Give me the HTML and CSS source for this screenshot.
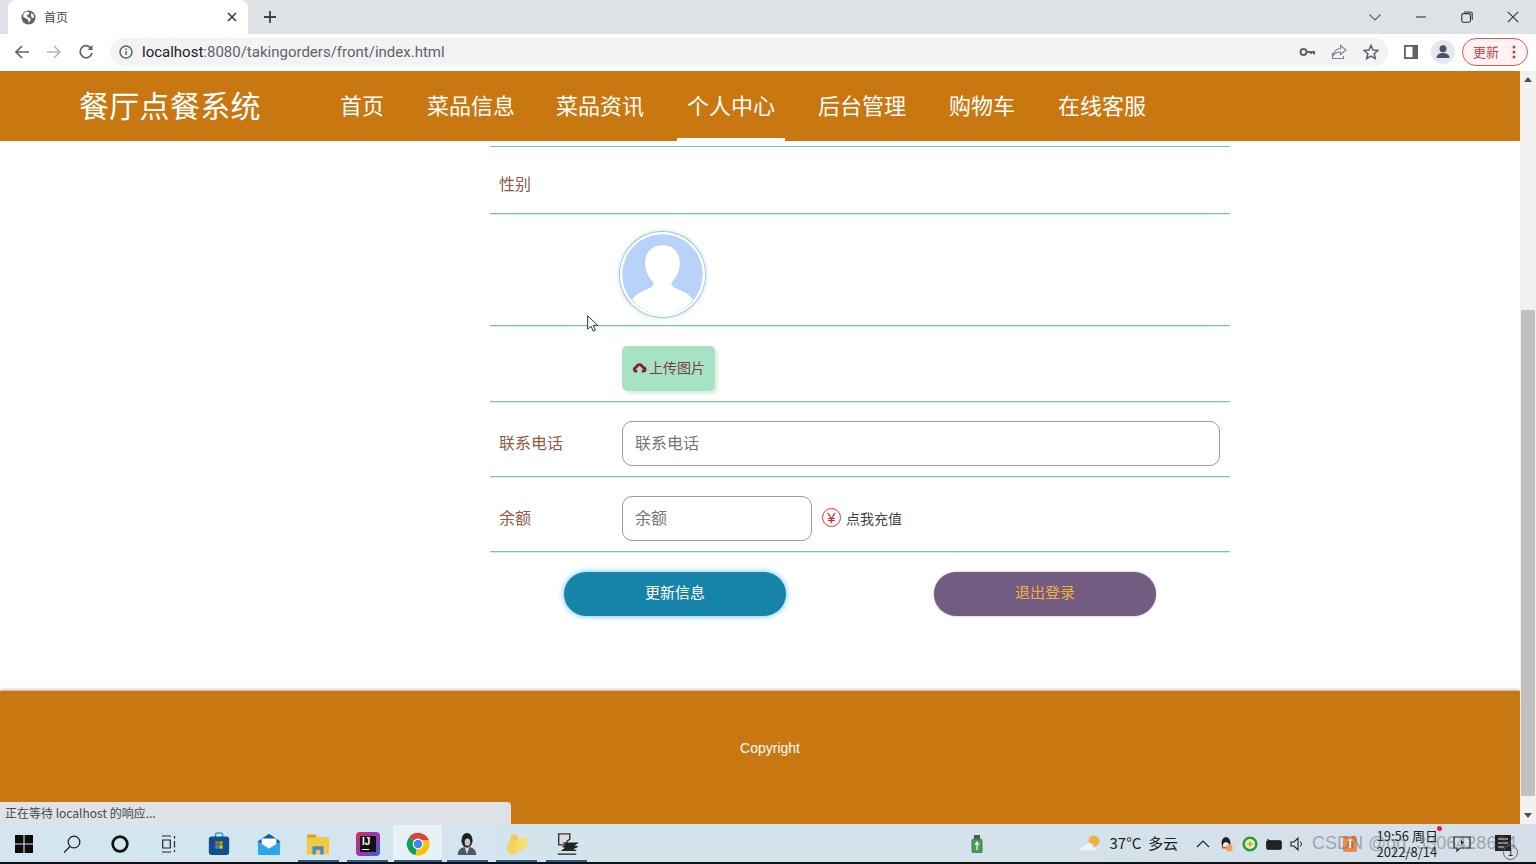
FILE: index.html
```html
<!DOCTYPE html>
<html lang="zh-CN">
<head>
<meta charset="utf-8">
<title>首页</title>
<link rel="stylesheet" href="styles.css">
</head>
<body>
<div class="tabstrip">
  <div class="tab">
    <svg class="tab-globe" viewBox="0 0 16 16"><circle cx="8" cy="8" r="7.5" fill="#5f6368"/><path d="M3 3.500l3-2 3 1-1 2.500-2 .5 1.500 2.500 2.500.5.500 2-2 3-1-3-3-2-2-1 0-3z M11 3l2.500 2 .5 3-2 .5-1.500-2z" fill="#fff"/></svg>
    <span class="tab-title">首页</span>
    <svg class="tab-close" viewBox="0 0 10 10"><path d="M1 1l8 8M9 1l-8 8" stroke="#3c4043" stroke-width="1.700"/></svg>
  </div>
  <svg class="newtab" viewBox="0 0 12 12"><path d="M6 0v12M0 6h12" stroke="#3c4043" stroke-width="1.800"/></svg>
  <div class="winctl">
    <svg class="wc wc-down" viewBox="0 0 12 7"><path d="M.5.500L6 6l5.500-5.500" fill="none" stroke="#5f6368" stroke-width="1.100"/></svg>
    <svg class="wc wc-min" viewBox="0 0 12 12"><path d="M1 6h10" stroke="#333" stroke-width="1.100"/></svg>
    <svg class="wc wc-res" viewBox="0 0 12 12"><rect x=".8" y="2.600" width="8.600" height="8.600" rx="1.500" fill="none" stroke="#333" stroke-width="1.100"/><path d="M3 1h6.500A1.700 1.700 0 0 1 11.200 2.700V9" fill="none" stroke="#333" stroke-width="1.100"/></svg>
    <svg class="wc wc-x" viewBox="0 0 12 12"><path d="M.8.800l10.400 10.400M11.200.800L.8 11.200" stroke="#333" stroke-width="1.100"/></svg>
  </div>
</div>

<div class="toolbar">
  <svg class="tb-ic" viewBox="0 0 16 16"><path d="M15 8H2M8 2L2 8l6 6" fill="none" stroke="#5f6368" stroke-width="1.700"/></svg>
  <svg class="tb-ic" viewBox="0 0 16 16"><path d="M1 8h13M8 2l6 6-6 6" fill="none" stroke="#b5b8bc" stroke-width="1.700"/></svg>
  <svg class="tb-ic" viewBox="0 0 16 16"><path d="M13.500 5A6 6 0 1 0 14 9" fill="none" stroke="#5f6368" stroke-width="1.700"/><path d="M14.500 1v5h-5z" fill="#5f6368"/></svg>
  <div class="omnibox">
    <svg class="info" viewBox="0 0 14 14"><circle cx="7" cy="7" r="6" fill="none" stroke="#5f6368" stroke-width="1.500"/><path d="M7 6v4M7 3.500v1.500" stroke="#5f6368" stroke-width="1.500"/></svg>
    <span class="url"><span class="url-host">localhost</span>:8080/takingorders/front/index.html</span>
    <div class="omni-right">
      <svg class="tb-ic" viewBox="0 0 16 16"><circle cx="4.500" cy="8" r="3" fill="none" stroke="#5f6368" stroke-width="2"/><path d="M7.500 8H15v2.500M12 8v2" fill="none" stroke="#5f6368" stroke-width="2"/></svg>
      <svg class="tb-ic" viewBox="0 0 16 16"><path d="M9.500 1.500L15 6l-5.500 4.500V8C6 8 3.500 9 2 12c.5-4.500 3-7 7.500-7.500zM1.500 9v5.500h11V12" fill="none" stroke="#80868b" stroke-width="1.200"/></svg>
      <svg class="tb-ic" viewBox="0 0 16 16"><path d="M8 1.500l2 4.500 4.800.5-3.600 3.200 1 4.800L8 12.100l-4.200 2.400 1-4.800L1.200 6.500 6 6z" fill="none" stroke="#5f6368" stroke-width="1.600"/></svg>
    </div>
  </div>
  <svg class="panel" viewBox="0 0 14 14"><rect width="14" height="14" fill="#5f6368"/><rect x="1.800" y="1.800" width="6.700" height="10.400" fill="#fff"/></svg>
  <div class="profile"><svg viewBox="0 0 16 16"><circle cx="8" cy="4.800" r="3.500" fill="#4b5563"/><path d="M1.500 14c0-3.500 3-5 6.500-5s6.500 1.500 6.500 5z" fill="#4b5563"/></svg></div>
  <div class="update"><span class="update-text">更新</span><svg viewBox="0 0 4 14"><circle cx="2" cy="2" r="1.500" fill="#c9424a"/><circle cx="2" cy="7" r="1.500" fill="#c9424a"/><circle cx="2" cy="12" r="1.500" fill="#c9424a"/></svg></div>
</div>

<div class="viewport">
  <div class="page">
    <header class="site-header">
      <div class="logo">餐厅点餐系统</div>
      <nav class="nav">
        <a class="nav-item">首页</a>
        <a class="nav-item">菜品信息</a>
        <a class="nav-item nav-tight">菜品资讯</a>
        <a class="nav-item active">个人中心</a>
        <a class="nav-item">后台管理</a>
        <a class="nav-item">购物车</a>
        <a class="nav-item">在线客服</a>
      </nav>
    </header>
    <main class="main">
      <form class="form">
        <div class="row row-sex"><label class="label">性别</label></div>
        <div class="row row-avatar">
          <span class="label"></span>
          <div class="avatar">
            <svg viewBox="0 0 80 80"><circle cx="40" cy="40" r="40" fill="#b8d2f8"/><path d="M40 11c-12 0-18 9-17 20 .6 7 4 12 8 17 .8 2-.5 3.500-3 5-6 3-14 5-18 12 7 9 18 15 30 15s23-6 30-15c-4-7-12-9-18-12-2.500-1.500-3.800-3-3-5 4-5 7.400-10 8-17 1-11-5-20-17-20z" fill="#fff"/></svg>
          </div>
        </div>
        <div class="row row-upload">
          <span class="label"></span>
          <button type="button" class="upload">
            <svg viewBox="0 0 16 12"><path d="M4 11.500A3.500 3.500 0 0 1 3.500 4.600 4.700 4.700 0 0 1 12.400 4.500 3.500 3.500 0 0 1 12 11.500h-1.500V8.500h2L8 4 3.500 8.500h2v3z" fill="#8b1e2d"/></svg>
            <span class="upload-text">上传图片</span>
          </button>
        </div>
        <div class="row">
          <label class="label">联系电话</label>
          <input class="input input-wide" placeholder="联系电话">
        </div>
        <div class="row">
          <label class="label">余额</label>
          <input class="input input-money" placeholder="余额">
          <span class="yen">¥</span>
          <span class="recharge">点我充值</span>
        </div>
        <div class="actions">
          <button type="button" class="btn btn-update">更新信息</button>
          <button type="button" class="btn btn-logout">退出登录</button>
        </div>
      </form>
    </main>
    <footer class="footer">Copyright</footer>
  </div>
  <div class="scrollbar">
    <svg class="sb-arrow" viewBox="0 0 8 5"><path d="M4 0l4 5H0z" fill="#505050"/></svg>
    <div class="sb-track"><div class="sb-thumb"></div></div>
    <svg class="sb-arrow" viewBox="0 0 8 5"><path d="M0 0h8L4 5z" fill="#505050"/></svg>
  </div>
  <div class="status">正在等待 localhost 的响应...</div>
  <svg class="cursor" viewBox="0 0 11 17"><path d="M.7.700v13.500l3.300-3 2.200 5 2.200-1-2.200-4.800h4.500z" fill="#fff" stroke="#333" stroke-width="1"/></svg>
</div>

<div class="taskbar">
  <div class="tk-sys">
    <svg class="tk-s" viewBox="0 0 16 16"><path d="M0 0h7.500v7.500H0zM8.500 0H16v7.500H8.500zM0 8.500h7.500V16H0zM8.500 8.500H16V16H8.500z" fill="#0c0c0c"/></svg>
  </div>
  <div class="tk-sys">
    <svg class="tk-s" viewBox="0 0 18 18"><circle cx="11" cy="7" r="5.800" fill="none" stroke="#222" stroke-width="1.300"/><path d="M7 11.500L1 17.500" stroke="#222" stroke-width="1.300"/></svg>
  </div>
  <div class="tk-sys">
    <svg class="tk-s" viewBox="0 0 16 16"><circle cx="8" cy="8" r="6.500" fill="none" stroke="#111" stroke-width="2.400"/></svg>
  </div>
  <div class="tk-sys">
    <svg class="tk-s" viewBox="0 0 18 18"><path d="M3 1h9M3 17h9M3.700 5h7.600v8H3.700zM15.500 1v2.500M15.500 6v6.500M15.500 15v2" fill="none" stroke="#222" stroke-width="1.200"/></svg>
  </div>
  <div class="tk-app">
    <svg class="tk-i" viewBox="0 0 24 26"><path d="M8 6V3.500A2.500 2.500 0 0 1 10.500 1h3A2.500 2.500 0 0 1 16 3.500V6" fill="none" stroke="#2aa0d8" stroke-width="1.600"/><rect x="1" y="5" width="22" height="20" rx="3" fill="#0f4f8a"/><rect x="8" y="10" width="3.700" height="3.700" fill="#f25022"/><rect x="12.300" y="10" width="3.700" height="3.700" fill="#7fba00"/><rect x="8" y="14.300" width="3.700" height="3.700" fill="#00a4ef"/><rect x="12.300" y="14.300" width="3.700" height="3.700" fill="#ffb900"/></svg>
  </div>
  <div class="tk-app">
    <svg class="tk-i" viewBox="0 0 26 26"><path d="M13 2L25 10v4H1v-4z" fill="#0f5fa8"/><path d="M1 10l12 8 12-8v13a2 2 0 0 1-2 2H3a2 2 0 0 1-2-2z" fill="#2aa7e8"/><path d="M5 7h16v6l-8 5-8-5z" fill="#fff"/></svg>
  </div>
  <div class="tk-app on">
    <svg class="tk-i" viewBox="0 0 26 26"><path d="M1 4a1.500 1.500 0 0 1 1.500-1.500H10l2 3h11.500A1.500 1.500 0 0 1 25 7v16a1.500 1.500 0 0 1-1.500 1.500h-21A1.500 1.500 0 0 1 1 23z" fill="#f5c842"/><path d="M1 3h10v3H1z" fill="#d9a21f"/><path d="M7 15.500h12v9h-3.500v-5h-5v5H7z" fill="#3f8fd2"/></svg>
  </div>
  <div class="tk-app on">
    <div class="ij"><span class="ij-text">IJ</span><span class="ij-bar"></span></div>
  </div>
  <div class="tk-app on active">
    <svg class="tk-i" viewBox="0 0 24 24"><path d="M12 12L3.300 5A11.500 11.500 0 0 1 23 8.500H12z" fill="#db4437"/><path d="M12 12L3.300 5A11.500 11.500 0 0 0 9.500 23.300z" fill="#0f9d58"/><path d="M12 8.500h11A11.500 11.500 0 0 1 9.500 23.300z" fill="#f4c20d"/><circle cx="12" cy="12" r="5.400" fill="#fff"/><circle cx="12" cy="12" r="4.200" fill="#4285f4"/></svg>
  </div>
  <div class="tk-app on">
    <svg class="tk-i" viewBox="0 0 24 26"><path d="M2 25c0-6 4-9 10-9s10 3 10 9z" fill="#4d5a60"/><path d="M9.500 16l2.500 8 2.500-8z" fill="#e8e2dc"/><ellipse cx="12" cy="9" rx="6" ry="8" fill="#1f1f22"/><ellipse cx="12.500" cy="11" rx="3" ry="4" fill="#d9c3b4"/></svg>
  </div>
  <div class="tk-app on">
    <svg class="tk-i" viewBox="0 0 26 26"><ellipse cx="9" cy="16" rx="6.500" ry="8.500" fill="#f3d35a" transform="rotate(20 9 16)"/><ellipse cx="18" cy="13" rx="6" ry="8" fill="#f7dc6f" transform="rotate(35 18 13)"/><ellipse cx="10" cy="6" rx="4" ry="3.500" fill="#f0cd4e"/></svg>
  </div>
  <div class="tk-app on">
    <svg class="tk-i" viewBox="0 0 26 26"><path d="M4 2h12v6l-3 2v4H4z" fill="#ddd" stroke="#333" stroke-width="1.500"/><path d="M3 24h20M10 12h14l-4 3 4 1-6 3 5 1H8l4-3-3-1 4-2z" fill="#222" stroke="#222" stroke-width="1.200"/></svg>
  </div>
  <div class="tray">
    <svg class="tr-usb" viewBox="0 0 12 18"><rect x="3" y="0" width="6" height="5" fill="#555"/><rect x="1" y="4" width="10" height="14" rx="1.500" fill="#3fa34d" stroke="#555" stroke-width=".8"/><path d="M6 7v8M4 10l2-3 2 3" fill="none" stroke="#fff" stroke-width="1.200"/></svg>
    <svg class="tr-weather" viewBox="0 0 24 18"><circle cx="16" cy="6" r="5.500" fill="#f0b040"/><path d="M1 16c0-3 2-5 5-5 1-3 4-4 6-3 3 1 3 3 3 4 2 0 4 1 5 4z" fill="#eef3f8" stroke="#c9d5df" stroke-width=".6"/></svg>
    <span class="tr-temp">37°C&nbsp; 多云</span>
    <svg class="tr-chev" viewBox="0 0 14 8"><path d="M1 7l6-6 6 6" fill="none" stroke="#222" stroke-width="1.200"/></svg>
    <svg class="tr-ic" viewBox="0 0 16 18"><ellipse cx="8" cy="8" rx="5" ry="7" fill="#222"/><ellipse cx="8" cy="11" rx="3.500" ry="4" fill="#f4f4f4"/><path d="M3 12h10l-1 2H4z" fill="#d9432e"/><circle cx="11.500" cy="13.500" r="4" fill="#f0a060"/></svg>
    <svg class="tr-ic" viewBox="0 0 16 16"><circle cx="8" cy="8" r="6.300" fill="#e8f0c8" stroke="#2f9a3a" stroke-width="2.600"/><path d="M8 5v6M5 8h6" stroke="#d9a21f" stroke-width="1.600"/></svg>
    <svg class="tr-ic" viewBox="0 0 16 12"><rect x=".7" y="2.700" width="14.600" height="8.600" rx="1" fill="#222" stroke="#222"/><path d="M1 1l3 2" stroke="#222"/></svg>
    <svg class="tr-ic" viewBox="0 0 16 14"><path d="M1 5h3l4-4v12l-4-4H1z" fill="none" stroke="#222" stroke-width="1.100"/><path d="M10.500 4.500a4 4 0 0 1 0 5" fill="none" stroke="#222"/></svg>
    <svg class="tr-ime" viewBox="0 0 14 16"><rect width="14" height="16" rx="2" fill="#ee8a50"/><path d="M4 4h6M7 4v8" stroke="#fff" stroke-width="1.500"/></svg>
    <div class="clock"><span>19:56 周日</span><span>2022/8/14</span></div>
    <svg class="tr-note" viewBox="0 0 18 16"><path d="M1 1h16v11H7l-3 3v-3H1z" fill="none" stroke="#222" stroke-width="1.200"/><path d="M8 4v5l3-2.500z" fill="#222"/></svg>
    <svg class="tr-dark" viewBox="0 0 18 18"><rect width="16" height="16" fill="#222"/><path d="M3 4h10M3 8h10M3 12h6" stroke="#eee"/></svg>
  </div>
  <span class="dot"></span>
  <span class="badge">1</span>
  <span class="watermark">CSDN @qq_3306428634</span>
</div>
</body>
</html>
```
FILE: styles.css
```css
* { box-sizing: border-box; }
html, body { margin: 0; padding: 0; }
body {
  width: 1536px;
  height: 864px;
  overflow: hidden;
  display: flex;
  flex-direction: column;
  font-family: "Noto Sans CJK SC", "Liberation Sans", sans-serif;
  background: #fff;
}

/* browser chrome */
.tabstrip {
  height: 34px;
  background: #dee1e6;
  display: flex;
  align-items: center;
  flex: none;
}
.tab {
  width: 240px;
  height: 34px;
  margin-left: 8px;
  background: #fff;
  border-radius: 8px 8px 0 0;
  display: flex;
  align-items: center;
  padding: 0 11px 0 13px;
}
.tab-globe { width: 15px; height: 15px; }
.tab-title { margin-left: 8px; padding-bottom: 2px; font-size: 12px; color: #45474a; flex: 1; }
.tab-close { width: 10px; height: 10px; }
.newtab { width: 12px; height: 12px; margin-left: 16px; }
.winctl { margin-left: auto; display: flex; align-items: center; height: 30px; }
.wc { width: 12px; height: 12px; }
.wc-down { height: 7px; margin-right: 34px; }
.wc-min { margin-right: 34px; }
.wc-res { margin-right: 34px; }
.wc-x { margin-right: 17px; }

.toolbar {
  height: 37px;
  background: #fff;
  display: flex;
  align-items: center;
  flex: none;
  padding: 0 0 1px 6px;
}
.tb-ic { width: 16px; height: 16px; margin: 0 8px; flex: none; }
.omnibox {
  width: 1278px;
  height: 28px;
  margin-left: 8px;
  background: #f1f3f4;
  border-radius: 14px;
  display: flex;
  align-items: center;
  padding-left: 9px;
}
.info { width: 14px; height: 14px; }
.url {
  margin-left: 9px;
  font-family: Roboto, sans-serif;
  font-size: 15px;
  color: #5f6368;
  white-space: nowrap;
}
.url-host { color: #202124; }
.omni-right { margin-left: auto; display: flex; align-items: center; padding-right: 1px; }
.panel { width: 14px; height: 14px; margin-left: 16px; flex: none; }
.profile {
  width: 24px;
  height: 24px;
  margin-left: 13px;
  border-radius: 50%;
  background: #e4e7eb;
  display: flex;
  align-items: center;
  justify-content: center;
}
.profile svg { width: 16px; height: 16px; }
.update {
  width: 66px;
  height: 28px;
  margin-left: 7px;
  border: 1.500px solid #cf5a60;
  border-radius: 14px;
  background: #fdf3f2;
  color: #c9424a;
  font-size: 13px;
  display: flex;
  align-items: center;
  padding-left: 10px;
}
.update-text { padding-bottom: 2px; }
.update svg { width: 4px; height: 14px; margin-left: 13px; }

/* page */
.viewport {
  flex: 1;
  display: flex;
  position: relative;
  min-height: 0;
}
.page {
  width: 1520px;
  display: flex;
  flex-direction: column;
}
.site-header {
  height: 70px;
  background: #c97711;
  display: flex;
  align-items: center;
  padding-left: 79px;
  flex: none;
}
.logo {
  width: 251px;
  font-size: 30px;
  letter-spacing: .3px;
  color: #fff;
  line-height: 66px;
  height: 70px;
  white-space: nowrap;
}
.nav { display: flex; gap: 23px; height: 70px; }
.nav-item {
  padding: 0 10px;
  font-size: 22px;
  color: #fff;
  line-height: 66px;
  height: 70px;
  border-bottom: 3px solid transparent;
  white-space: nowrap;
}
.nav-item.active { border-bottom-color: #fff; }
.nav-tight { margin-left: -2px; }

.main { flex: 1; min-height: 0; }
.form { width: 740px; margin: 5px 0 0 490px; border-top: 1px solid #7fbccb; }
.row {
  display: flex;
  align-items: center;
  padding: 19px 10px 10px 9px;
  border-bottom: 1px solid #7fbccb;
  box-shadow: 0 1px 0 rgba(127, 188, 203, .3);
}
.row-sex { min-height: 67px; }
.row-avatar { padding-top: 18px; padding-bottom: 8px; }
.row-upload { padding-top: 20px; }
.label {
  width: 123px;
  flex: none;
  padding-bottom: 4px;
  font-size: 16px;
  color: #8f5a42;
}
.avatar {
  width: 85px;
  height: 85px;
  margin-left: -2px;
  border-radius: 50%;
  border: 2px solid #fff;
  box-shadow: 0 0 0 1px #9cc5cf, 0 0 5px 1px #bfe0e6;
  overflow: hidden;
}
.avatar svg { display: block; width: 100%; height: 100%; }
.upload {
  width: 93px;
  height: 45px;
  border: 0;
  border-radius: 5px;
  background: #a5e3c4;
  box-shadow: 3px 3px 3px #dcefe4;
  display: flex;
  align-items: center;
  justify-content: center;
  gap: 2px;
  padding: 0 0 2px;
  font: inherit;
  font-size: 14px;
  color: #7a3f3f;
}
.upload svg { width: 15px; height: 11px; }
.upload-text { padding-bottom: 2px; }
.input {
  height: 45px;
  border: 1.500px solid #9a9aa0;
  border-radius: 10px;
  padding: 0 12px 4px;
  font: inherit;
  font-size: 16px;
  background: #fff;
  outline: none;
}
.input::placeholder { color: #757575; }
.input-wide { width: 598px; }
.input-money { width: 190px; }
.yen {
  width: 19px;
  height: 19px;
  margin: 0 5px 2px 10px;
  border: 1px solid #e33;
  border-radius: 50%;
  color: #e02020;
  font-size: 15px;
  line-height: 17px;
  text-align: center;
  font-family: "Liberation Sans", sans-serif;
}
.recharge { font-size: 14px; color: #444; padding-bottom: 2px; }
.actions {
  display: flex;
  justify-content: center;
  gap: 148px;
  margin-top: 20px;
}
.btn {
  width: 222px;
  height: 44px;
  border: 0;
  border-radius: 22px;
  font: inherit;
  font-size: 15px;
  padding: 0 0 5px;
}
.btn-update { background: #1684a9; color: #fff; box-shadow: 0 0 6px #58c4e2; }
.btn-logout { background: #725c82; color: #f0b040; box-shadow: 0 0 2px #a598b0; }

.footer {
  height: 133px;
  flex: none;
  background: #c97711;
  box-shadow: 0 -1px 3px rgba(0, 0, 0, .35);
  color: #fff;
  font-family: "Liberation Sans", sans-serif;
  font-size: 14px;
  text-align: center;
  line-height: 114px;
  padding-left: 20px;
}

.scrollbar {
  width: 16px;
  background: #f1f1f1;
  display: flex;
  flex-direction: column;
  align-items: center;
}
.sb-arrow { width: 8px; height: 5px; margin: 6px 0; flex: none; }
.sb-track { flex: 1; width: 100%; padding: 222px 1px 12px; margin-bottom: -1px; }
.sb-thumb { height: 100%; background: #c1c1c1; }

.status {
  position: absolute;
  left: 0;
  bottom: 0;
  width: 511px;
  height: 22px;
  background: #dfe2e7;
  border-top-right-radius: 4px;
  padding-left: 5px;
  font-size: 12px;
  line-height: 22px;
  color: #45484c;
}
.cursor {
  position: absolute;
  left: 587px;
  top: 244px;
  width: 11px;
  height: 17px;
}

/* taskbar */
.taskbar {
  height: 40px;
  flex: none;
  position: relative;
  display: flex;
  align-items: stretch;
  background: linear-gradient(90deg, #d3e6f0, #d4e3ec 60%, #d4dfe9);
  border-bottom: 2px solid #111;
  padding-top: 1px;
}
.tk-sys { width: 48px; display: flex; align-items: center; justify-content: center; }
.tk-s { width: 18px; height: 18px; }
.tk-app {
  width: 49.700px;
  display: flex;
  align-items: center;
  justify-content: center;
}
.tk-sys + .tk-app { margin-left: 2px; }
.tk-app.on {
  background: linear-gradient(#2a5a8c, #2a5a8c) center bottom / 41px 2px no-repeat;
}
.tk-app.active {
  background: linear-gradient(#2a5a8c, #2a5a8c) center bottom / 48px 2px no-repeat, #e8f2f6;
}
.tk-i { width: 24px; height: 24px; }
.ij {
  width: 24px;
  height: 24px;
  background: linear-gradient(135deg, #d92b5f, #8a3ac0 60%, #2a6bdc);
  border-radius: 4px;
  position: relative;
  padding: 4px;
}
.ij-text {
  display: block;
  height: 16px;
  background: #111;
  color: #fff;
  font-family: "Liberation Sans", sans-serif;
  font-weight: 700;
  font-size: 10px;
  line-height: 12px;
  padding-left: 2px;
}
.ij-bar {
  position: absolute;
  left: 6px;
  bottom: 6px;
  width: 7px;
  height: 1px;
  background: #fff;
}
.tray { flex: 1; display: flex; align-items: center; padding-left: 379px; }
.tr-usb { width: 12px; height: 18px; flex: none; }
.tr-weather { width: 24px; height: 18px; margin-left: 95px; flex: none; }
.tr-temp { margin-left: 8px; width: 77px; padding-bottom: 2px; font-size: 15px; color: #222; white-space: nowrap; }
.tr-chev { width: 14px; height: 8px; margin-left: 9px; flex: none; }
.tr-ic { width: 16px; height: 16px; margin-left: 8px; flex: none; }
.tr-ime { width: 14px; height: 16px; margin-left: 37px; flex: none; }
.clock {
  margin-left: 20px;
  width: 68px;
  display: flex;
  flex-direction: column;
  font-size: 13px;
  line-height: 16px;
  color: #222;
  white-space: nowrap;
}
.tr-note { width: 18px; height: 16px; margin-left: 8px; flex: none; }
.tr-dark { width: 18px; height: 18px; margin-left: 24px; flex: none; }
.dot {
  position: absolute;
  left: 1437px;
  top: 2px;
  width: 5px;
  height: 5px;
  border-radius: 50%;
  background: #e8202a;
}
.badge {
  position: absolute;
  left: 1503px;
  top: 21px;
  width: 15px;
  height: 15px;
  border-radius: 50%;
  border: 1px solid #666;
  font-family: "Liberation Sans", sans-serif;
  font-size: 10px;
  line-height: 13px;
  text-align: center;
  color: #222;
}
.watermark {
  position: absolute;
  left: 1312px;
  top: 8px;
  font-family: "Liberation Sans", sans-serif;
  font-size: 18px;
  line-height: 22px;
  color: rgba(90, 90, 90, .45);
  white-space: nowrap;
}
```
